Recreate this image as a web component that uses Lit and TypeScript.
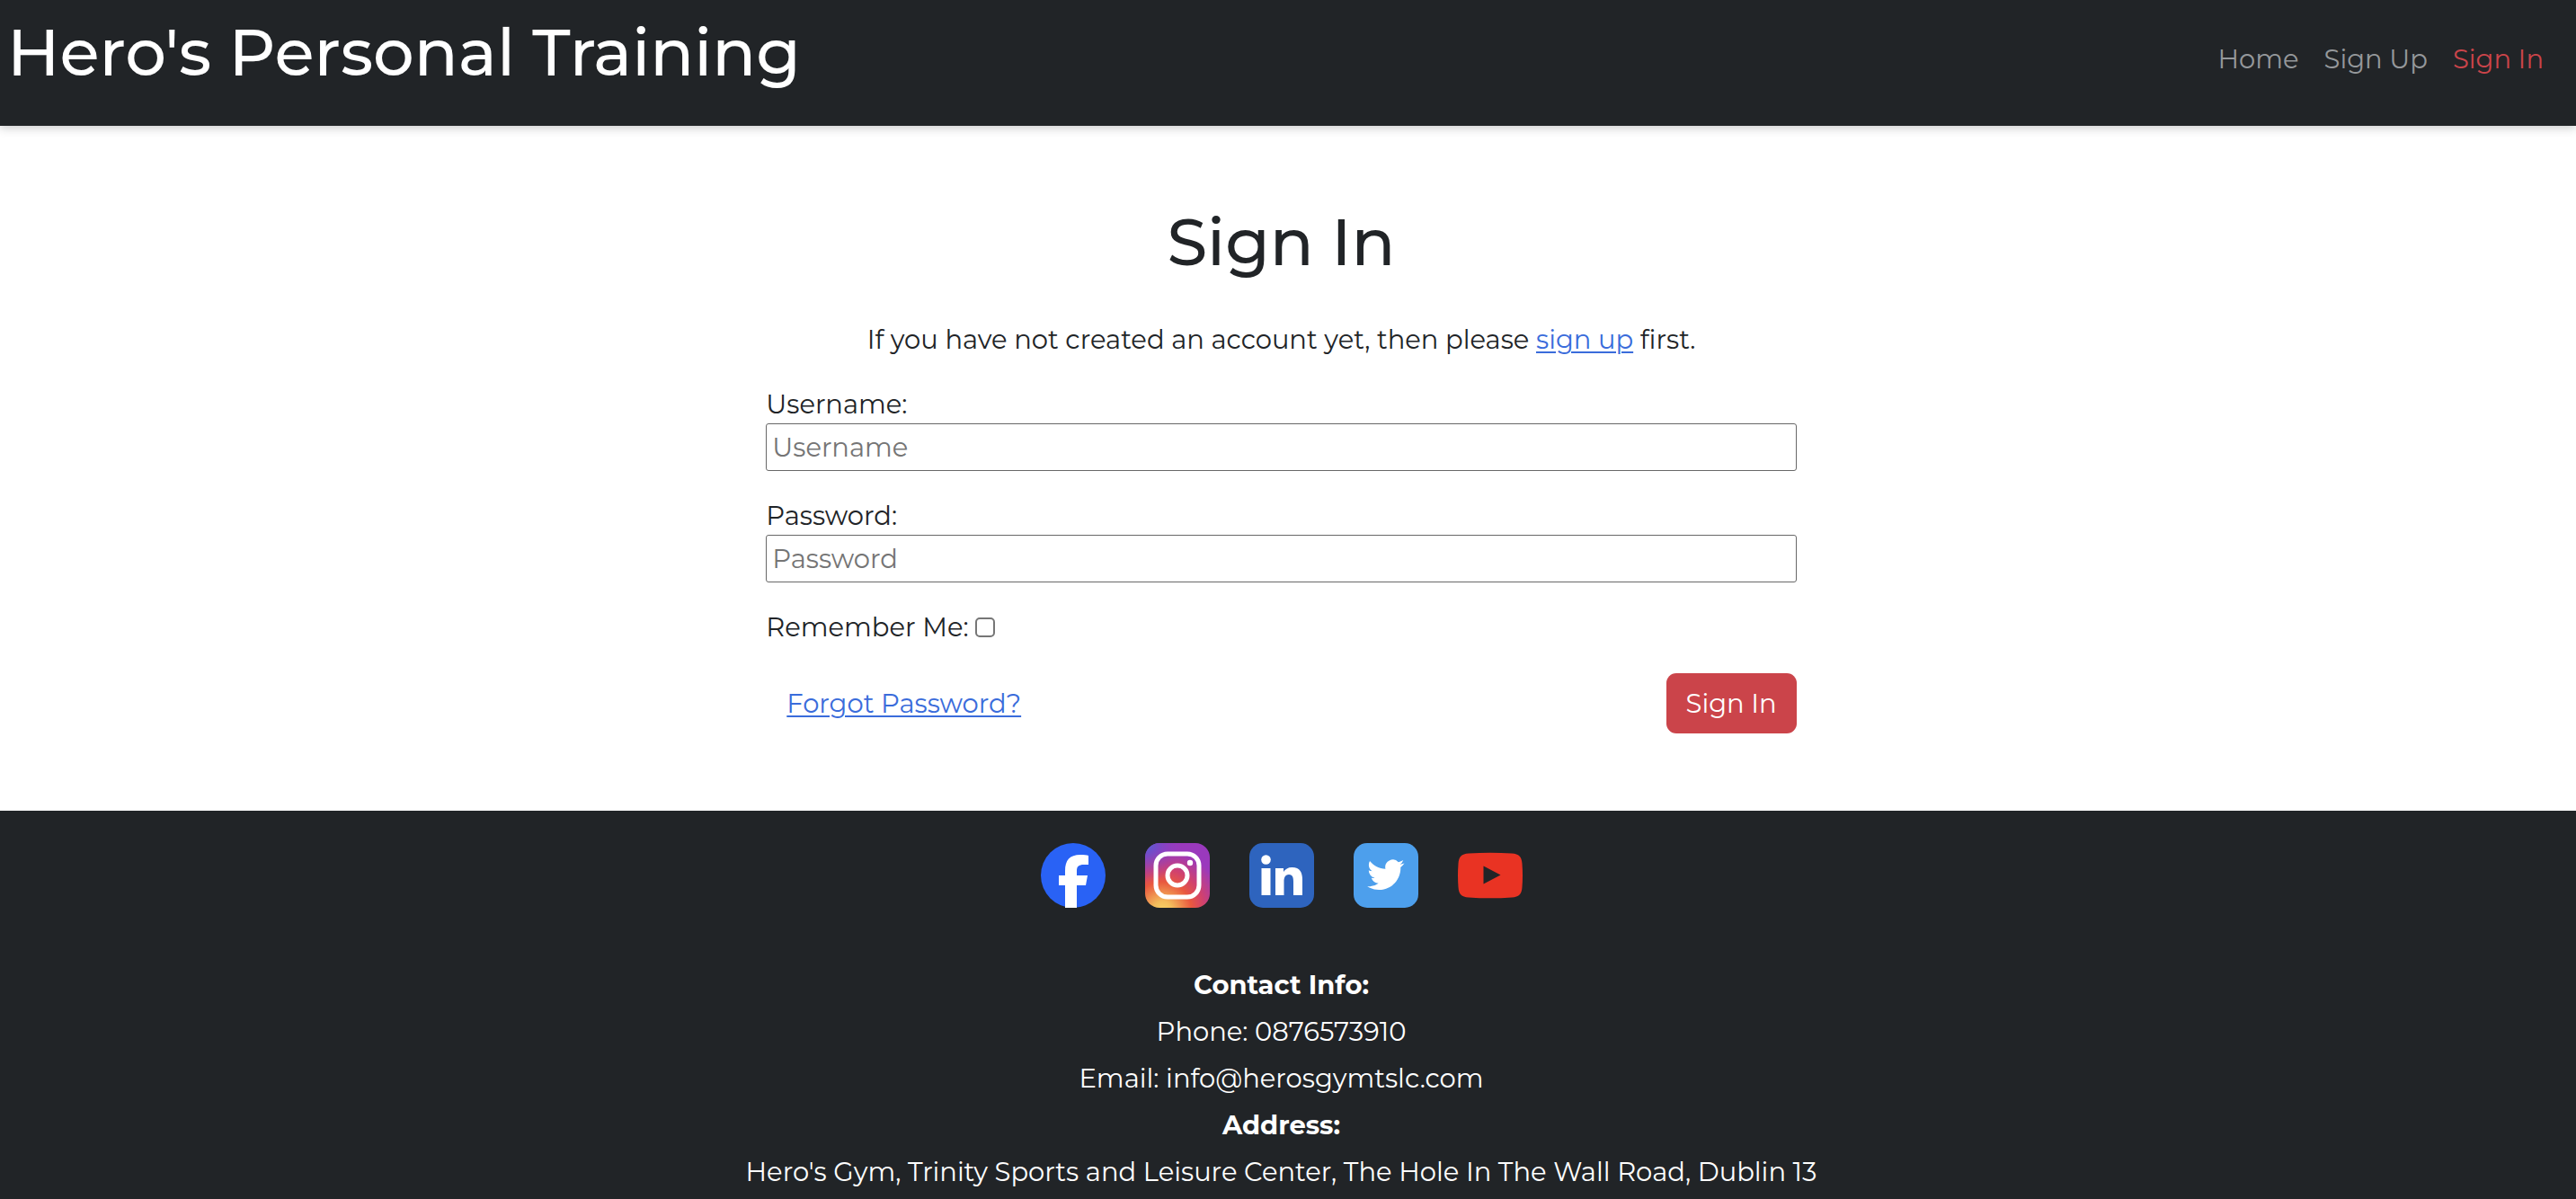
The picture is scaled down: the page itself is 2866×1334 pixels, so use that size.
import { LitElement, html, css, svg } from "lit";
import { customElement } from "lit/decorators.js";

const facebook = svg`
  <circle cx="36" cy="36" r="36" fill="#2962f5"></circle>
  <path fill="#fff" d="M27 72V47h-7V36h7v-5c0-12 5-18 17-18 4 0 7 0 9 1v10h-5c-6 0-8 2-8 7v5h12l-2 11H40v25c-4 .8-9 .8-13 0z"></path>`;

const instagram = svg`
  <defs>
    <radialGradient id="ig-warm" cx="0.27" cy="1.05" r="1">
      <stop offset="0" stop-color="#f7d367"></stop>
      <stop offset="0.15" stop-color="#f4bd5c"></stop>
      <stop offset="0.45" stop-color="#e9583f"></stop>
      <stop offset="0.65" stop-color="#d0416f"></stop>
      <stop offset="0.95" stop-color="#9a39bd"></stop>
    </radialGradient>
    <radialGradient id="ig-cool" cx="0" cy="0" r="0.6">
      <stop offset="0" stop-color="#4a68d8"></stop>
      <stop offset="0.3" stop-color="#6a50cc" stop-opacity="0.8"></stop>
      <stop offset="1" stop-color="#9a39bd" stop-opacity="0"></stop>
    </radialGradient>
  </defs>
  <rect width="72" height="72" rx="16" fill="url(#ig-warm)"></rect>
  <rect width="72" height="72" rx="16" fill="url(#ig-cool)"></rect>
  <rect x="12" y="12" width="48" height="48" rx="13" fill="none" stroke="#fff" stroke-width="5"></rect>
  <circle cx="36" cy="36" r="11" fill="none" stroke="#fff" stroke-width="5"></circle>
  <circle cx="50" cy="22" r="3.2" fill="#fff"></circle>`;

const linkedin = svg`
  <rect width="72" height="72" rx="15" fill="#2e64be"></rect>
  <circle cx="18.500" cy="18.500" r="5.300" fill="#fff"></circle>
  <rect x="13.500" y="28" width="10" height="30" fill="#fff"></rect>
  <path fill="#fff" d="M29 28h9v4c2-3 5-5 9.500-5C56.500 27 59 33 59 41v17H49V43c0-4-.5-8-5-8s-5.500 4-5.500 8v15H29z"></path>`;

const twitter = svg`
  <rect width="72" height="72" rx="15" fill="#4d9fec"></rect>
  <path fill="#fff" transform="translate(15.200 14.600) scale(1.720)" d="M23.953 4.570a10 10 0 0 1-2.825.775 4.958 4.958 0 0 0 2.163-2.723c-.951.555-2.005.959-3.127 1.184a4.920 4.920 0 0 0-8.384 4.482C7.690 8.095 4.067 6.130 1.640 3.162a4.822 4.822 0 0 0-.666 2.475c0 1.710.87 3.213 2.188 4.096a4.904 4.904 0 0 1-2.228-.616v.06a4.923 4.923 0 0 0 3.946 4.827 4.996 4.996 0 0 1-2.212.085 4.936 4.936 0 0 0 4.604 3.417 9.867 9.867 0 0 1-6.102 2.105c-.39 0-.779-.023-1.170-.067a13.995 13.995 0 0 0 7.557 2.209c9.053 0 13.998-7.496 13.998-13.985 0-.21 0-.42-.015-.63A9.935 9.935 0 0 0 24 4.590z"></path>`;

const youtube = svg`
  <path fill="#e93323" fill-rule="evenodd" d="M12 11.500Q36 9.800 60 11.500C68 12 71 15 71.500 23Q72.500 36 71.500 49C71 57 68 60 60 60.500Q36 62.200 12 60.500C4 60 1 57 .5 49Q-.5 36 .5 23C1 15 4 12 12 11.500zM28.500 25.500v20L47.500 35.500z"></path>`;

const networks = [
  { name: "Facebook", href: "https://facebook.com", art: facebook },
  { name: "Instagram", href: "https://instagram.com", art: instagram },
  { name: "LinkedIn", href: "https://linkedin.com", art: linkedin },
  { name: "Twitter", href: "https://twitter.com", art: twitter },
  { name: "YouTube", href: "https://youtube.com", art: youtube },
];

@customElement("app-root")
export class AppRoot extends LitElement {
  static styles = css`
    :host {
      display: flex;
      flex-direction: column;
      min-height: 100vh;
      box-sizing: border-box;
      overflow-x: hidden;
      background: #fff;
      color: #212427;
      font-family: Montserrat, Inter, sans-serif;
      font-size: 29px;
      line-height: 43px;
    }
    * {
      box-sizing: border-box;
    }
    h1,
    h2,
    p {
      margin: 0;
      font-weight: 500;
    }
    p {
      font-weight: 400;
    }
    h1,
    h2 {
      font-size: 72px;
      line-height: 88px;
    }
    a {
      color: #3a6cdb;
      text-decoration-thickness: 2px;
      text-underline-offset: 3px;
    }
    .header {
      display: flex;
      justify-content: space-between;
      align-items: flex-start;
      padding: 14px 36px 38px 8px;
      background: #212427;
      box-shadow: 0 2px 10px rgba(33, 36, 39, 0.25);
    }
    .brand {
      color: #fff;
    }
    .links {
      display: flex;
      gap: 28px;
      padding-top: 30px;
    }
    .links a {
      color: #95989b;
      text-decoration: none;
    }
    .links .active {
      color: #cb444a;
    }
    .main {
      display: flex;
      flex-direction: column;
      padding: 85px 15px 86px 0;
    }
    .main h2,
    .intro {
      text-align: center;
    }
    .intro {
      margin: 43px 0 29px;
    }
    form {
      display: flex;
      flex-direction: column;
      width: 40vw;
      min-width: 600px;
      margin: 0 auto;
    }
    .field {
      display: flex;
      flex-direction: column;
      margin-bottom: 28px;
    }
    .field input {
      height: 53px;
      padding: 2px 6px;
      border: 1px solid #686868;
      border-radius: 3px;
      background: #fff;
      color: inherit;
      font: inherit;
    }
    .field input::placeholder {
      color: #757575;
      opacity: 1;
    }
    .remember {
      display: flex;
      align-items: center;
      gap: 7px;
      margin-bottom: 30px;
    }
    .remember input {
      appearance: none;
      width: 22px;
      height: 22px;
      margin: 0;
      border: 2px solid #767676;
      border-radius: 5px;
      background: #fff;
    }
    .remember input:checked {
      background: #3a6cdb;
    }
    .actions {
      display: flex;
      justify-content: space-between;
      align-items: center;
      padding-left: 23px;
    }
    .submit {
      padding: 12px 22px;
      border: 0;
      border-radius: 11px;
      background: #cb444a;
      color: #fff;
      font: inherit;
    }
    .footer {
      flex: 1;
      padding: 36px 15px 0 0;
      background: #212427;
      color: #fff;
      line-height: 52px;
      text-align: center;
    }
    .social {
      display: flex;
      justify-content: center;
      gap: 44px;
      margin-bottom: 60px;
    }
    .social a,
    .social svg {
      display: block;
      width: 72px;
      height: 72px;
    }
    .footer strong {
      font-weight: 700;
    }
  `;

  render() {
    return html`
      <header class="header">
        <h1 class="brand">Hero's Personal Training</h1>
        <nav class="links">
          <a href="#home">Home</a>
          <a href="#signup">Sign Up</a>
          <a class="active" href="#signin" aria-current="page">Sign In</a>
        </nav>
      </header>
      <main class="main">
        <h2>Sign In</h2>
        <p class="intro">
          If you have not created an account yet, then please
          <a href="#signup">sign up</a> first.
        </p>
        <form @submit=${(e: Event) => e.preventDefault()}>
          <div class="field">
            <label for="username">Username:</label>
            <input id="username" type="text" placeholder="Username" autocomplete="username" />
          </div>
          <div class="field">
            <label for="password">Password:</label>
            <input id="password" type="password" placeholder="Password" autocomplete="current-password" />
          </div>
          <div class="remember">
            <label for="remember">Remember Me:</label>
            <input id="remember" type="checkbox" />
          </div>
          <div class="actions">
            <a href="#reset">Forgot Password?</a>
            <button class="submit" type="submit">Sign In</button>
          </div>
        </form>
      </main>
      <footer class="footer">
        <div class="social">
          ${networks.map(
            (n) => html`<a href=${n.href} aria-label=${n.name}>
              <svg viewBox="0 0 72 72" aria-hidden="true">${n.art}</svg>
            </a>`
          )}
        </div>
        <p><strong>Contact Info:</strong></p>
        <p>Phone: 0876573910</p>
        <p>Email: info@herosgymtslc.com</p>
        <p><strong>Address:</strong></p>
        <p>Hero's Gym, Trinity Sports and Leisure Center, The Hole In The Wall Road, Dublin 13</p>
      </footer>
    `;
  }
}
